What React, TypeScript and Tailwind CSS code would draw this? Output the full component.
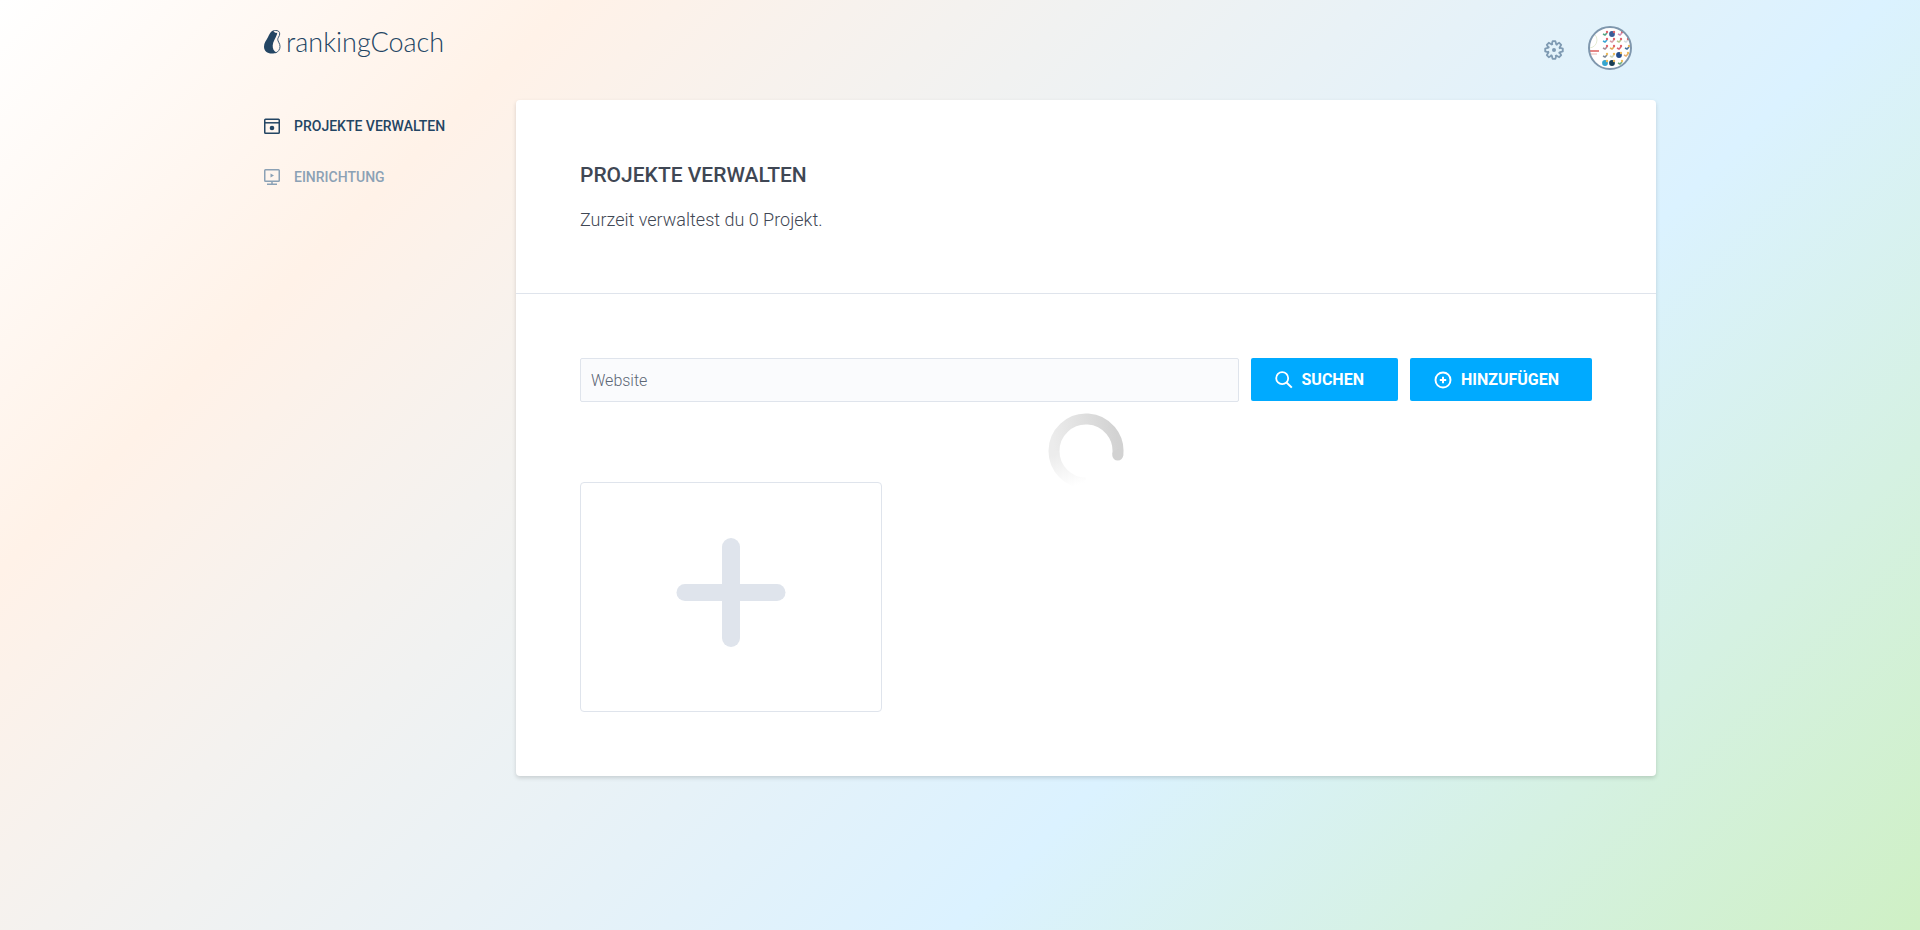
import React from "react";

function LogoMark() {
  return (
    <svg width="17" height="24" viewBox="0 0 17 24" fill="none" aria-hidden="true">
      <path
        d="M9 .6C6.6 1.6 5.6 4.2 3.8 7.6C2.2 10.6 0 13 0 16.8C0 21 3.2 23.6 7.8 23.6C9.8 23.6 11.4 23.2 12.4 22.5C9.8 21.4 8.6 18.8 8.7 15.6C8.8 11.8 11.6 8.2 13 4.2L13.2 2.8C11.6 3.2 10 2.4 9 .6Z"
        fill="#234563"
      />
      <path
        d="M9 1C10.6 .3 13 .3 14.4 1.1C16.4 2.6 15.8 5.2 14.5 7.2C13.4 8.9 13.6 10.3 14.7 12.2C16.5 15.2 16.4 18.1 14.8 20.4C14 21.6 13 22.3 11.6 22.9"
        stroke="#234563"
        strokeWidth="0.9"
      />
    </svg>
  );
}

function GearIcon() {
  const teeth = [0, 45, 90, 135, 180, 225, 270, 315];
  return (
    <svg width="20" height="20" viewBox="0 0 20 20" fill="none" stroke="#7f9bb3" aria-hidden="true">
      {teeth.map((angle) => (
        <path
          key={angle}
          d="M7.7 4.5L8.6 1.2H11.4L12.3 4.5L13.5 5"
          strokeWidth="1.8"
          strokeLinejoin="round"
          transform={`rotate(${angle} 10 10)`}
        />
      ))}
      <circle cx="10" cy="10" r="2" fill="#7f9bb3" stroke="none" />
    </svg>
  );
}

const marks = [
  [17, 8, "#55a586"], [24, 8, "#3b5b98"], [32, 8, "#d490b8"],
  [17, 15, "#39a5d5"], [24, 15, "#d9a0a8"], [31, 15, "#b8c98e"], [38, 15, "#d8dfe2"],
  [17, 22, "#a38d98"], [24, 22, "#e5ab57"], [31, 22, "#dd6571"], [39, 22, "#43719f"],
  [17, 30, "#7d8795"], [24, 30, "#d0d8bb"], [31, 29, "#244e8c"], [38, 29, "#e6af72"],
  [17, 37, "#36a5ce"], [24, 37, "#173d54"], [32, 37, "#6bae7c"],
] as const;

function Avatar() {
  return (
    <svg width="44" height="44" viewBox="0 0 44 44" aria-hidden="true">
      <defs>
        <clipPath id="avatar-clip"><circle cx="22" cy="22" r="21" /></clipPath>
      </defs>
      <circle cx="22" cy="22" r="21" fill="#fff" />
      <g clipPath="url(#avatar-clip)">
        <circle cx="1" cy="14" r="8" fill="none" stroke="#e5ebd3" />
        <path d="M1 25H11" stroke="#dc5c5b" strokeWidth="1.6" />
        <path d="M3 28H9" stroke="#e7a2a0" strokeWidth="0.8" />
        {marks.map(([x, y, color], i) => (
          <g key={i}>
            {[1, 13, 15, 16].includes(i) ? (
              <circle cx={x} cy={y} r="2.9" fill={color} />
            ) : (
              <path d={`M${x - 2} ${y}L${x} ${y + 1}L${x + 2} ${y - 1}`} stroke={color} strokeWidth="1.6" fill="none" />
            )}
            <circle cx={x + 2} cy={y - 2} r="1.2" fill={i < 10 ? "#e1646c" : "#edbb5d"} />
          </g>
        ))}
      </g>
      <circle cx="22" cy="22" r="21" fill="none" stroke="#7f97ad" strokeWidth="2" />
    </svg>
  );
}

function ProjectsIcon() {
  return (
    <svg width="16" height="16" viewBox="0 0 16 16" fill="none" stroke="currentColor" strokeWidth="1.5" aria-hidden="true">
      <rect x="0.75" y="1.25" width="14.5" height="14" rx="0.8" />
      <path d="M1 4.8H15" />
      <circle cx="8" cy="10" r="2.3" fill="currentColor" stroke="none" />
    </svg>
  );
}

function SetupIcon() {
  return (
    <svg width="16" height="16" viewBox="0 0 16 16" fill="none" stroke="currentColor" strokeWidth="1.5" aria-hidden="true">
      <rect x="0.75" y="0.75" width="14.5" height="11.5" rx="0.8" />
      <path d="M8 12V15M3 15.2H13" />
      <path d="M6.5 4.4V8.6L10 6.5Z" fill="currentColor" stroke="none" />
    </svg>
  );
}

function SearchIcon() {
  return (
    <svg width="18" height="18" viewBox="0 0 18 18" fill="none" stroke="currentColor" strokeWidth="1.8" aria-hidden="true">
      <circle cx="7.2" cy="7.2" r="6" />
      <path d="M11.5 11.5L16.8 16.6" strokeWidth="2" />
    </svg>
  );
}

function AddIcon() {
  return (
    <svg width="18" height="18" viewBox="0 0 18 18" fill="none" stroke="currentColor" aria-hidden="true">
      <circle cx="9" cy="9" r="7.5" strokeWidth="1.9" />
      <path d="M9 5.8V12.2M5.8 9H12.2" strokeWidth="2" />
    </svg>
  );
}

function Spinner() {
  return (
    <svg width="76" height="76" viewBox="0 0 76 76" fill="none" strokeWidth="11" role="status" aria-label="Laden">
      <defs>
        <linearGradient id="spinner-tail" x1="18" y1="38" x2="30" y2="72" gradientUnits="userSpaceOnUse">
          <stop stopColor="#ececec" />
          <stop offset="1" stopColor="#fff" />
        </linearGradient>
        <linearGradient id="spinner-arc" x1="6" y1="38" x2="70" y2="30" gradientUnits="userSpaceOnUse">
          <stop stopColor="#ececec" />
          <stop offset="1" stopColor="#d2d2d2" />
        </linearGradient>
      </defs>
      <path d="M6 38A32 32 0 0 0 38 70" stroke="url(#spinner-tail)" />
      <path d="M6 38A32 32 0 1 1 69.75 42" stroke="url(#spinner-arc)" />
      <circle cx="69.75" cy="42" r="5.5" fill="#d2d2d2" />
    </svg>
  );
}

export default function App() {
  return (
    <div className="min-h-screen bg-[linear-gradient(135deg,#ffffff_0%,#fff2e8_20%,#dbf2ff_66%,#cff0c5_100%)] font-['Roboto',sans-serif]">
      <div className="mx-auto max-w-[1392px]">
        <header className="flex h-[100px] items-start justify-between pr-6">
          <a href="#" aria-label="rankingCoach" className="flex items-start gap-[5px] pt-[30px] text-[#234563]">
            <LogoMark />
            <span className="font-['Lato',sans-serif] text-[27px] leading-6 font-light">rankingCoach</span>
          </a>
          <div className="flex items-start gap-6 pt-[26px]">
            <button type="button" aria-label="Einstellungen" className="mt-[14px]">
              <GearIcon />
            </button>
            <button type="button" aria-label="Profil">
              <Avatar />
            </button>
          </div>
        </header>
        <div className="flex items-start">
          <nav className="flex w-[252px] shrink-0 flex-col gap-[27px] pt-[14px] text-sm leading-6 font-medium">
            <a href="#" className="flex items-center gap-[14px] text-[#234563]">
              <ProjectsIcon />
              PROJEKTE VERWALTEN
            </a>
            <a href="#" className="flex items-center gap-[14px] text-[#8ba1b5]">
              <SetupIcon />
              EINRICHTUNG
            </a>
          </nav>
          <main className="relative min-w-0 flex-1 rounded bg-white shadow-[0_2px_4px_rgba(0,0,0,0.15)]">
            <section className="border-b border-[#dfe4ec] px-16 pt-[59px] pb-[59px] text-[#3f4754]">
              <h1 className="text-[21px] leading-8 font-medium">PROJEKTE VERWALTEN</h1>
              <p className="mt-[15px] text-lg leading-7 font-light">Zurzeit verwaltest du 0 Projekt.</p>
            </section>
            <section className="px-16 py-16">
              <form className="flex items-start gap-3" onSubmit={(e) => e.preventDefault()}>
                <input
                  type="text"
                  aria-label="Website"
                  placeholder="Website"
                  className="h-11 min-w-0 flex-1 rounded-xs border border-[#dfe4ec] bg-[#fafbfd] px-[10px] text-base font-light placeholder:text-[#5c6675]"
                />
                <button type="submit" className="flex h-[43px] items-center gap-[9px] rounded-xs bg-[#00aaff] pr-[34px] pl-6 text-base font-bold text-white">
                  <SearchIcon />
                  SUCHEN
                </button>
                <button type="button" className="flex h-[43px] items-center gap-[9px] rounded-xs bg-[#00aaff] pr-[33px] pl-6 text-base font-bold text-white">
                  <AddIcon />
                  HINZUFÜGEN
                </button>
              </form>
              <button
                type="button"
                aria-label="Projekt hinzufügen"
                className="mt-20 flex h-[230px] w-[302px] items-center justify-center rounded border border-[#dfe4ec] pb-[10px]"
              >
                <svg width="110" height="110" viewBox="0 0 110 110" fill="#dfe4ec" aria-hidden="true">
                  <rect x="46" y="1" width="18" height="109" rx="9" />
                  <rect x="0.5" y="47" width="109" height="17" rx="8.5" />
                </svg>
              </button>
            </section>
            <div className="pointer-events-none absolute inset-x-0 top-[313px] flex justify-center">
              <Spinner />
            </div>
          </main>
        </div>
      </div>
    </div>
  );
}
